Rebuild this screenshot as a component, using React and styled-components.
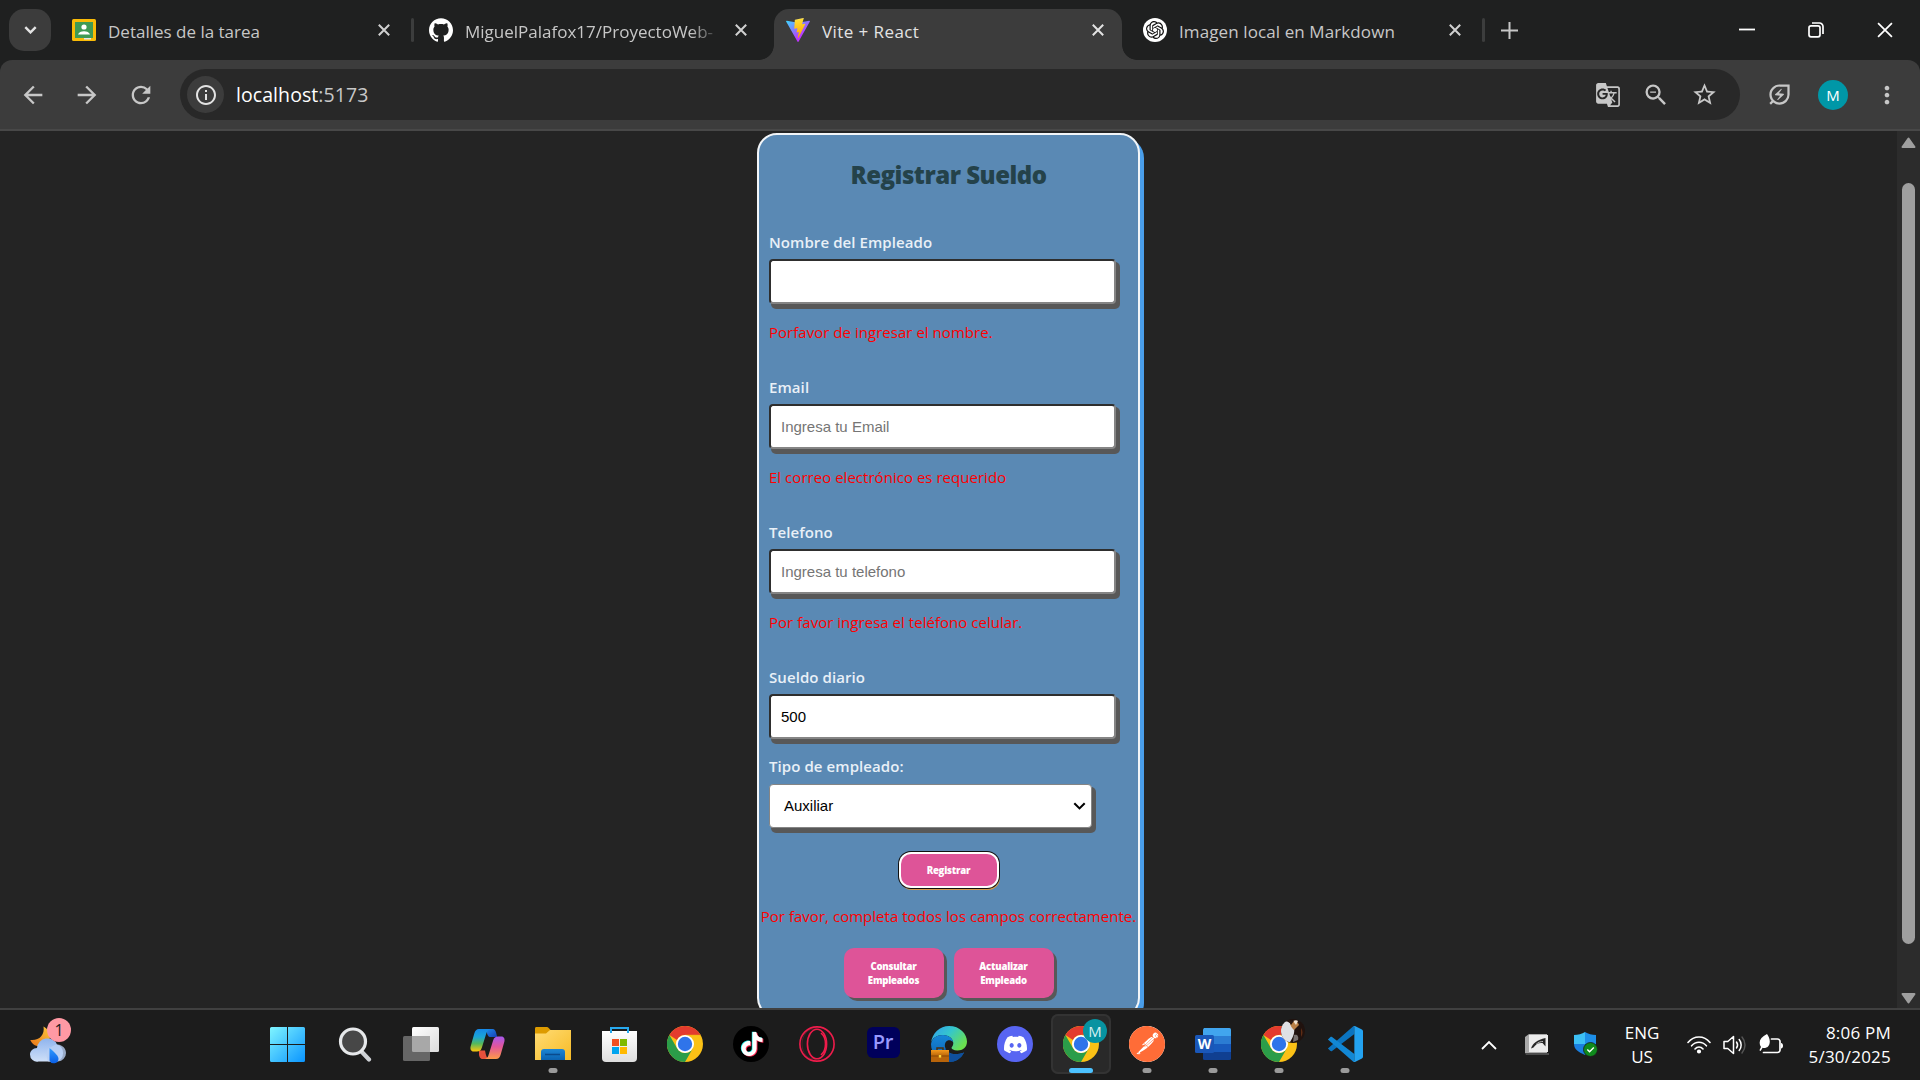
import React from "react";
import styled, { createGlobalStyle, css } from "styled-components";
import { SiGithub, SiOpenai, SiDiscord, SiPostman, SiTiktok } from "react-icons/si";
import { MdGTranslate, MdZoomOut, MdStarBorder, MdOutlineEnergySavingsLeaf, MdOutlineInfo, MdArrowBack, MdArrowForward, MdRefresh, MdMoreVert } from "react-icons/md";

const ui = `"Open Sans", "Noto Sans", sans-serif`;

const GlobalStyle = createGlobalStyle`
  * { box-sizing: border-box; }
  body { margin: 0; background: #242424; font-family: ${ui}; overflow: hidden; }
`;

const Screen = styled.div`
  display: flex;
  flex-direction: column;
  width: 1920px;
  height: 1080px;
  overflow: hidden;
  svg { display: block; flex: none; }
`;

/* ---------- tab strip ---------- */
const TabStrip = styled.header`
  display: flex;
  align-items: flex-end;
  height: 60px;
  background: #1f2020;
  flex: none;
`;
const TabSearch = styled.button`
  width: 42px;
  height: 42px;
  margin: 0 9px 9px 9px;
  padding: 0;
  border: 0;
  border-radius: 15px;
  background: #3c3c3c;
  display: grid;
  place-items: center;
`;
const Tab = styled.div`
  position: relative;
  display: flex;
  align-items: center;
  width: ${(p) => p.$w}px;
  height: 51px;
  padding: 0 ${(p) => p.$pr || 18}px 9px ${(p) => p.$pl || 12}px;
  border-radius: 15px 15px 0 0;
  color: ${(p) => (p.$active ? "#e3e3e3" : "#c7c7c7")};
  background: ${(p) => (p.$active ? "#3c3c3c" : "transparent")};
  ${(p) =>
    p.$active &&
    css`
      &::before,
      &::after {
        content: "";
        position: absolute;
        bottom: 0;
        width: 15px;
        height: 15px;
      }
      &::before {
        left: -15px;
        background: radial-gradient(circle at 0 0, transparent 14.5px, #3c3c3c 15.2px);
      }
      &::after {
        right: -15px;
        background: radial-gradient(circle at 100% 0, transparent 14.5px, #3c3c3c 15.2px);
      }
    `}
`;
const TabTitle = styled.span`
  flex: 1;
  margin: 4px 14px 0 12px;
  font-size: 17px;
  line-height: 24px;
  letter-spacing: ${(p) => p.$ls || 0}px;
  white-space: nowrap;
  overflow: hidden;
  ${(p) => p.$fade && "mask-image: linear-gradient(90deg, #000 88%, transparent 100%);"}
`;
const TabDivider = styled.i`
  width: 3px;
  height: 24px;
  margin: 0 ${(p) => p.$r || 0}px 18px 0;
  border-radius: 2px;
  background: #3c3d3d;
`;
const NewTab = styled.div`
  margin: 0 0 21px 16px;
`;
const WindowButtons = styled.div`
  display: flex;
  align-items: center;
  gap: 53px;
  margin: 0 27px 22px auto;
`;

/* ---------- toolbar ---------- */
const ToolbarBack = styled.div`
  background: #1f2020;
  flex: none;
`;
const Toolbar = styled.nav`
  display: flex;
  align-items: center;
  height: 71px;
  padding: 0 19px;
  border-radius: 12px 12px 0 0;
  background: #3c3c3c;
  border-bottom: 2px solid #484848;
  color: #c7c7c7;
`;
const NavIcons = styled.div`
  display: flex;
  flex: none;
  gap: 26px;
  width: 161px;
`;
const Omnibox = styled.div`
  display: flex;
  flex: none;
  align-items: center;
  width: 1560px;
  height: 51px;
  margin-right: 26px;
  padding: 0 22px 0 7px;
  border-radius: 26px;
  background: #282828;
`;
const SiteInfo = styled.span`
  display: grid;
  place-items: center;
  width: 37px;
  height: 37px;
  border-radius: 50%;
  background: #3c3c3c;
  color: #e3e3e3;
`;
const Url = styled.span`
  flex: 1;
  margin-left: 12px;
  font-size: 19.5px;
  line-height: 28px;
  letter-spacing: 0.07px;
  color: #c7c7c7;
  b { font-weight: 400; color: #fff; }
`;
const OmniIcons = styled.div`
  display: flex;
  align-items: center;
  gap: 21px;
`;
const Avatar = styled.span`
  display: grid;
  place-items: center;
  width: 30px;
  height: 30px;
  margin: 0 25px;
  border-radius: 50%;
  background: #0097a7;
  color: #fff;
  font: 15px/30px ${ui};
`;

/* ---------- page ---------- */
const Viewport = styled.main`
  display: flex;
  height: 877px;
  flex: none;
  overflow: hidden;
  background: #242424;
`;
const Content = styled.div`
  flex: 1;
  display: flex;
  justify-content: center;
  align-items: flex-start;
  padding-top: 2px;
`;
const Card = styled.form`
  display: flex;
  flex-direction: column;
  width: 383px;
  height: 885px;
  padding: 22px 10px 18px;
  border: 2px solid #f2f5f8;
  border-radius: 20px;
  background: #5a89b4;
  box-shadow: 4px 5px 0 #4a9eea;
`;
const Title = styled.h2`
  margin: 0 0 37px;
  text-align: center;
  font-size: 24px;
  line-height: 36px;
  font-weight: 800;
  letter-spacing: -0.48px;
  white-space: nowrap;
  color: #24424a;
`;
const Field = styled.div`
  margin-bottom: ${(p) => p.$gap}px;
`;
const Label = styled.label`
  display: block;
  margin-bottom: ${(p) => p.$mb || 5}px;
  font-size: 15px;
  line-height: 24px;
  font-weight: 600;
  letter-spacing: 0.08px;
  color: #e9f0f7;
`;
const boxed = css`
  border-radius: 4px;
  background: #fff;
  font-family: "Liberation Sans", Arial, sans-serif;
  font-size: 15px;
  box-shadow: 3px 4px 0 1px #585858;
`;
const Input = styled.input`
  ${boxed}
  display: block;
  width: 347px;
  height: 45px;
  padding: 0 10px;
  border: 2px solid;
  border-color: #2e2e2e #858585 #858585 #2e2e2e;
  color: #000;
  outline: 0;
  &::placeholder { color: #757575; }
`;
const Select = styled.div`
  ${boxed}
  display: flex;
  align-items: center;
  justify-content: space-between;
  width: 323px;
  height: 44px;
  padding: 0 5px 1px 14px;
  border: 1px solid #858585;
  color: #000;
`;
const ErrorText = styled.p`
  margin: ${(p) => p.$m || "16px 0 0"};
  font-size: 15px;
  line-height: 24px;
  letter-spacing: 0.03px;
  white-space: nowrap;
  text-align: ${(p) => p.$align || "left"};
  color: #ff0000;
`;
const PinkButton = styled.button`
  width: ${(p) => p.$w}px;
  height: ${(p) => p.$h}px;
  padding: 2px 0 0;
  border: 0;
  border-radius: 10px;
  background: #de5498;
  color: #fff;
  font: 800 9.6px/14px ${ui};
  letter-spacing: -0.22px;
  box-shadow: ${(p) =>
    p.$focused ? "0 0 0 2px #fff, 0 0 0 3px #101010, 1px 2px 0 2px #d79a4b" : "3px 3px 0 #585858"};
`;
const Actions = styled.div`
  display: flex;
  justify-content: center;
  gap: 10px;
`;
const Scrollbar = styled.aside`
  display: flex;
  flex-direction: column;
  align-items: center;
  width: 23px;
  padding: 6px 0 4px;
  background: #2c2c2c;
`;
const Thumb = styled.div`
  width: 13px;
  height: 761px;
  margin: 35px 0 auto;
  border-radius: 7px;
  background: #9f9f9f;
`;

/* ---------- taskbar ---------- */
const Taskbar = styled.footer`
  display: flex;
  align-items: center;
  height: 72px;
  border-top: 2px solid #404040;
  background: #1c1c1c;
  color: #fff;
`;
const Widgets = styled.div`
  position: relative;
  width: 256px;
  margin-bottom: 2px;
  padding-left: 29px;
`;
const Count = styled.span`
  position: absolute;
  left: 47px;
  top: -6px;
  width: 24px;
  height: 24px;
  border-radius: 50%;
  background: #ff99a4;
  color: #1c1c1c;
  font: 16px/24px ${ui};
  text-align: center;
`;
const Apps = styled.div`
  display: flex;
  margin-bottom: 2px;
`;
const AppTile = styled.div`
  position: relative;
  display: grid;
  place-items: center;
  width: 60px;
  height: 60px;
  margin: 0 3px;
  border-radius: 7px;
  ${(p) => p.$active && "background: #292929; box-shadow: inset 0 0 0 2px #333;"}
  &::after {
    content: "";
    display: ${(p) => (p.$open || p.$active ? "block" : "none")};
    position: absolute;
    bottom: 1px;
    left: 50%;
    width: ${(p) => (p.$active ? 24 : 9)}px;
    height: 5px;
    transform: translateX(-50%);
    border-radius: 3px;
    background: ${(p) => (p.$active ? "#4cc2ff" : "#9a9a9a")};
  }
`;
const ProfileBadge = styled.span`
  position: absolute;
  top: 5px;
  right: 4px;
  width: 24px;
  height: 24px;
  border-radius: 50%;
  font: 15px/24px ${ui};
  text-align: center;
  color: #d8f0f2;
  background: ${(p) => p.$bg};
`;
const Round = styled.span`
  display: grid;
  place-items: center;
  width: ${(p) => p.$size || 36}px;
  height: ${(p) => p.$size || 36}px;
  border-radius: 50%;
  background: ${(p) => p.$bg};
  color: #fff;
`;
const Premiere = styled.span`
  width: 33px;
  height: 31px;
  margin-bottom: 3px;
  border-radius: 6px;
  background: #00005b;
  color: #9999ff;
  font: 600 20px/29px ${ui};
  letter-spacing: -0.3px;
  text-align: center;
`;
const Tray = styled.div`
  display: flex;
  align-items: center;
  margin-left: auto;
  padding-right: 29px;
`;
const TrayItem = styled.div`
  margin: 0 ${(p) => p.$r}px 1px 0;
`;
const TrayText = styled.div`
  margin-right: ${(p) => p.$r || 0}px;
  margin-bottom: 1px;
  width: ${(p) => p.$w}px;
  font-size: 17px;
  line-height: 24px;
  letter-spacing: ${(p) => p.$ls || 0}px;
  white-space: nowrap;
  > div { display: flex; justify-content: ${(p) => (p.$align === "right" ? "flex-end" : "center")}; }
`;

/* ---------- drawings ---------- */
const Cross = ({ size = 12, w = 2, color = "#d0d0d0" }) => (
  <svg width={size} height={size} viewBox="0 0 12 12">
    <path d="M.8.8l10.4 10.4M11.2.8L.8 11.2" stroke={color} strokeWidth={w} />
  </svg>
);
const Chevron = ({ w, h, color, sw, up }) => (
  <svg width={w} height={h} viewBox="0 0 16 10">
    <path d={up ? "M1 9l7-7 7 7" : "M1.5 1.5L8 8l6.500-6.500"} fill="none" stroke={color} strokeWidth={sw} />
  </svg>
);
const Classroom = () => (
  <svg width="24" height="24" viewBox="0 0 24 24">
    <rect y="1" width="24" height="22" rx="1.500" fill="#f9bb07" />
    <rect x="3" y="4" width="18" height="16" fill="#3f9a55" />
    <circle cx="12" cy="9" r="2.600" fill="#fff" />
    <path d="M6 16.500c1-4.500 11-4.500 12 0z" fill="#fff" />
    <path d="M12 20h7v1.500h-7z" fill="#e6e6e6" />
  </svg>
);
const Vite = () => (
  <svg width="24" height="24" viewBox="0 0 256 257">
    <defs>
      <linearGradient id="va" x1="-.8%" x2="57.600%" y1="7.600%" y2="78.400%"><stop offset="0" stopColor="#41d1ff" /><stop offset="1" stopColor="#bd34fe" /></linearGradient>
      <linearGradient id="vb" x1="43%" x2="50%" y1="2%" y2="89%"><stop offset="0" stopColor="#ffea83" /><stop offset=".08" stopColor="#ffdd35" /><stop offset="1" stopColor="#ffa800" /></linearGradient>
    </defs>
    <path fill="url(#va)" d="M255.153 37.938L134.897 252.976c-2.483 4.440-8.862 4.466-11.382.048L.875 37.958c-2.746-4.814 1.371-10.646 6.827-9.670l120.385 21.517a6.537 6.537 0 0 0 2.322-.004l117.867-21.483c5.438-.991 9.574 4.796 6.877 9.620Z" />
    <path fill="url(#vb)" d="M185.432.063L96.440 17.501a3.268 3.268 0 0 0-2.634 3.014l-5.474 92.456a3.268 3.268 0 0 0 3.997 3.378l24.777-5.718c2.318-.535 4.413 1.507 3.936 3.838l-7.361 36.047c-.495 2.426 1.782 4.500 4.151 3.780l15.304-4.649c2.372-.72 4.652 1.360 4.150 3.788l-11.698 56.621c-.732 3.542 3.979 5.473 5.943 2.437l1.313-2.028l72.516-144.720c1.215-2.423-.88-5.186-3.540-4.672l-25.505 4.922c-2.396.462-4.435-1.770-3.759-4.114l16.646-57.705c.677-2.350-1.370-4.583-3.769-4.113Z" />
  </svg>
);
const Chrome = () => (
  <svg width="36" height="36" viewBox="0 0 36 36">
    <circle cx="18" cy="18" r="18" fill="#fbc116" />
    <path d="M2.410 9A18 18 0 0 1 33.600 9H18a9 9 0 0 0-8 5z" fill="#e33b2e" />
    <path d="M2.410 9A18 18 0 0 0 18 36l7.800-13.500A9 9 0 0 1 10.200 22.500z" fill="#2b9d49" />
    <path d="M18 9h15.600" stroke="#e8a613" strokeWidth=".5" />
    <circle cx="18" cy="18" r="9" fill="#fff" />
    <circle cx="18" cy="18" r="7.200" fill="#2f74ea" />
  </svg>
);
const Weather = () => (
  <svg width="38" height="40" viewBox="0 0 38 40">
    <defs>
      <linearGradient id="wm" x1="0" y1="1" x2="1" y2="0"><stop stopColor="#e8741a" /><stop offset="1" stopColor="#fbc93c" /></linearGradient>
      <linearGradient id="wc" x1="0" y1="0" x2="0" y2="1"><stop stopColor="#8fb4ee" /><stop offset="1" stopColor="#cfe0f8" /></linearGradient>
      <linearGradient id="wd" x1="0" y1="0" x2="0" y2="1"><stop stopColor="#2f9bff" /><stop offset="1" stopColor="#0a5fe6" /></linearGradient>
    </defs>
    <path d="M14.500 2.500C23 7 24 20 12 22 7 23 3 20 1.300 16 10 17 16 11 14.500 2.500z" fill="url(#wm)" />
    <path d="M8 24a10.500 10.500 0 0 1 20-3.500 9 9 0 0 1 0 17H9.500A7 7 0 0 1 1 30.500C1 27 4 24 8 24z" fill="url(#wc)" />
    <path d="M20 24c-3 2-3 8-1 13.500h10a8.500 8.500 0 0 0 8-8.500 8.500 8.500 0 0 0-13-7z" fill="#b9d0f4" opacity=".8" />
    <path d="M20.500 24c5 4 9 8 9 11a4.700 4.700 0 0 1-9 1.500z" fill="url(#wd)" />
  </svg>
);
const Start = () => (
  <svg width="38" height="35" viewBox="0 0 38 35">
    <defs><linearGradient id="st" x1="0" y1="0" x2="35" y2="35" gradientUnits="userSpaceOnUse"><stop stopColor="#7ff5ff" /><stop offset=".5" stopColor="#45c4ff" /><stop offset="1" stopColor="#0a95ff" /></linearGradient></defs>
    <path fill="url(#st)" d="M1.500 0H17v17H0V1.500A1.500 1.500 0 0 1 1.500 0zM18 0h15.500A1.500 1.500 0 0 1 35 1.500V17H18zM0 18h17v17H1.500A1.500 1.500 0 0 1 0 33.500zM18 18h17v15.500a1.500 1.500 0 0 1-1.500 1.500H18z" />
  </svg>
);
const Search = () => (
  <svg width="34" height="36" viewBox="0 0 34 36">
    <path d="M23 25l8 8.500" stroke="#cfd2d6" strokeWidth="4.200" strokeLinecap="round" />
    <circle cx="15" cy="15.500" r="12.500" fill="#474747" stroke="#e6e8ea" strokeWidth="3.200" />
  </svg>
);
const TaskView = () => (
  <svg width="36" height="36" viewBox="0 0 36 36">
    <defs><linearGradient id="tv" x1="0" y1="0" x2="1" y2="1"><stop stopColor="#fff" /><stop offset="1" stopColor="#dcdcdc" /></linearGradient></defs>
    <rect x="9" y="1" width="27" height="25" rx="1.500" fill="url(#tv)" />
    <rect y="10" width="27" height="25" rx="1.500" fill="#666" />
    <path d="M9 10h18v16H10.500A1.500 1.500 0 0 1 9 24.500z" fill="#a8a8a8" />
  </svg>
);
const Copilot = () => (
  <svg width="35" height="32" viewBox="0 0 35 32">
    <defs>
      <linearGradient id="c1" x1="0" y1="0" x2="0" y2="1"><stop stopColor="#1688e8" /><stop offset=".35" stopColor="#1aa5d8" /><stop offset=".65" stopColor="#54b95c" /><stop offset="1" stopColor="#ffc60a" /></linearGradient>
      <linearGradient id="c2" x1="0" y1="0" x2="0" y2="1"><stop stopColor="#a858ee" /><stop offset=".45" stopColor="#e2569a" /><stop offset="1" stopColor="#ff9a48" /></linearGradient>
      <linearGradient id="c3" x1="0" y1="0" x2="1" y2="1"><stop stopColor="#1f8be8" /><stop offset="1" stopColor="#163fb8" /></linearGradient>
    </defs>
    <path d="M16 1h6c3 0 3.600 2 4.200 4.200L27.200 9H20c-3 0-4-8-4-8z" fill="url(#c3)" />
    <path d="M9 22.500h6c1 4 1 8 5 8.500h-7c-3 0-3.400-2-4-4z" fill="#e8503c" />
    <path d="M9 1h12c-4 0-4.500 4-5.500 7l-3.600 11.500c-1 3-2.400 4-5 4H3.500C1 23.500 0 21 .6 18.500L4.300 5.500C5.200 2.500 6.500 1 9 1z" fill="url(#c1)" />
    <path d="M26 31H14c4 0 4.500-4 5.500-7l3.600-11.500c1-3 2.400-4 5-4h3.400c2.500 0 3.500 2.500 2.900 5L30.700 26.500C29.800 29.500 28.500 31 26 31z" fill="url(#c2)" />
  </svg>
);
const Explorer = () => (
  <svg width="36" height="34" viewBox="0 0 36 34">
    <defs>
      <linearGradient id="ex" x1="0" y1="0" x2="1" y2="1"><stop stopColor="#ffdc74" /><stop offset="1" stopColor="#f7bb26" /></linearGradient>
      <linearGradient id="eb" x1="0" y1="0" x2="0" y2="1"><stop stopColor="#1d86d4" /><stop offset="1" stopColor="#0b62b0" /></linearGradient>
    </defs>
    <path d="M0 1.500C0 .5.500 0 1.500 0h10c1 0 1.500.3 2.200 1L16 3.500V8H0z" fill="#dd9b00" />
    <path d="M0 6.500h11L15 3h21v30H0z" fill="url(#ex)" />
    <path d="M6 33v-8a3 3 0 0 1 3-3h18a3 3 0 0 1 3 3v8z" fill="url(#eb)" />
    <path d="M10 27.500h15" stroke="#0a4a8c" strokeWidth="1.500" />
  </svg>
);
const Store = () => (
  <svg width="35" height="36" viewBox="0 0 35 36">
    <defs><linearGradient id="so" x1="0" y1="0" x2="0" y2="1"><stop stopColor="#fff" /><stop offset="1" stopColor="#dedede" /></linearGradient></defs>
    <path d="M9 8V2h17v6" fill="none" stroke="#27a9ee" strokeWidth="2" />
    <path d="M0 5h35v27a4 4 0 0 1-4 4H4a4 4 0 0 1-4-4z" fill="url(#so)" />
    <path d="M9 2v5M26 2v5" stroke="#27a9ee" strokeWidth="2" />
    <path d="M10 13h7v7h-7z" fill="#f25022" /><path d="M18 13h7v7h-7z" fill="#7fba00" />
    <path d="M10 21h7v7h-7z" fill="#00a4ef" /><path d="M18 21h7v7h-7z" fill="#ffb900" />
  </svg>
);
const TikTok = () => (
  <svg width="36" height="36" viewBox="0 0 36 36">
    <circle cx="18" cy="18" r="18" fill="#000" />
    <g transform="translate(6.300 5.500)"><SiTiktok size={24} color="#25f4ee" /></g>
    <g transform="translate(7.900 6.800)"><SiTiktok size={24} color="#fe2c55" /></g>
    <g transform="translate(7 6)"><SiTiktok size={24} color="#fff" /></g>
  </svg>
);
const OperaGX = () => (
  <svg width="36" height="36" viewBox="0 0 36 36" fill="none" stroke="#ee1c4b">
    <circle cx="18" cy="18" r="17.100" strokeWidth="1.600" />
    <ellipse cx="18" cy="18" rx="9.600" ry="14.800" strokeWidth="1.600" />
    <path d="M22 7c6 5 6 17 0 22" strokeWidth="1.600" />
    <path d="M18 3.200C8 1.500 3 10 3 18s5 16.500 15 14.800" strokeWidth=".5" opacity=".5" />
  </svg>
);
const Edge = () => (
  <svg width="36" height="36" viewBox="0 0 36 36">
    <defs>
      <linearGradient id="e1" x1="0" y1="0" x2="1" y2=".6"><stop stopColor="#2f9cf2" /><stop offset=".5" stopColor="#35c6cc" /><stop offset="1" stopColor="#6ae04f" /></linearGradient>
      <linearGradient id="e2" x1="0" y1="0" x2="0" y2="1"><stop stopColor="#1587d8" /><stop offset="1" stopColor="#0f5fae" /></linearGradient>
      <linearGradient id="e3" x1="0" y1="0" x2="0" y2="1"><stop stopColor="#f59a1c" /><stop offset=".5" stopColor="#b8640a" /><stop offset="1" stopColor="#b8640a" /></linearGradient>
    </defs>
    <path d="M0 17C1 7 9 0 18 0c11 0 18 8 18 15.500 0 6-4.500 9-9.500 9-4 0-6-1.500-6-2.700 0-.8 1.800-1.700 1.800-4.600C22.300 13 18 9 12 9 6 9 1 12 0 17z" fill="url(#e1)" />
    <path d="M0 18C1 12 6 9 12 9c5 0 9.500 3 10.200 7C18 12 13 15 14 21c1 6 9 9.500 19 5.500C30 33 24 36 18 36 8 36 0 28 0 18z" fill="url(#e2)" />
    <path d="M14 21c1 6 9 9.500 19 5.500C30 33 24 36 18 36c-1-4-6-8-4-15z" fill="#0f4f9c" />
    <path d="M6 24v-2h6v2" fill="none" stroke="#4a2f10" strokeWidth="1.500" />
    <rect y="24" width="18" height="12" fill="url(#e3)" />
    <path d="M0 30h18" stroke="#8a4a06" /><rect x="7.800" y="29" width="2.400" height="2.600" fill="#ffd83a" />
  </svg>
);
const Word = () => (
  <svg width="36" height="32" viewBox="0 0 36 32">
    <path d="M9 0h25.500A1.500 1.500 0 0 1 36 1.500V8H8V1.500z" fill="#41a5ee" />
    <path d="M8 8h28v8H8z" fill="#2b7cd3" /><path d="M8 16h28v8H8z" fill="#185abd" />
    <path d="M8 24h28v6.500a1.500 1.500 0 0 1-1.500 1.500h-25A1.500 1.500 0 0 1 8 30.500z" fill="#103f91" />
    <rect y="7" width="19" height="18" rx="1.500" fill="#1a57b8" />
    <text x="9.500" y="20.800" textAnchor="middle" fontFamily="Open Sans, sans-serif" fontWeight="700" fontSize="14" fill="#fff">W</text>
  </svg>
);
const VSCode = () => (
  <svg width="36" height="36" viewBox="0 0 100 100">
    <path d="M2.500 62.500L9 69c1.500 1.400 3.500 1.500 5 .3L76 22V0L73 1 2.500 62.500z" fill="#0b74c0" />
    <path d="M2.500 37.500L9 31c1.500-1.400 3.500-1.500 5-.3L76 78v22l-3-1L2.500 37.500z" fill="#1287d4" />
    <path d="M73 1c2-1.200 4-1 6 0l18 9c2 1 3 2.500 3 4.500v71c0 2-1 3.500-3 4.500l-18 9c-2 1-4 1-6 0 2.500 1 3-1 3-3V4c0-2-.5-4-3-3z" fill="#23a2f0" />
  </svg>
);
const Photo = () => (
  <svg width="24" height="24" viewBox="0 0 24 24">
    <defs><clipPath id="ph"><circle cx="12" cy="12" r="12" /></clipPath></defs>
    <g clipPath="url(#ph)">
      <rect width="24" height="24" fill="#20120e" />
      <path d="M0 4C5 0 10 4 13 9c1 5-1 9-4 14L0 22z" fill="#dfe0e4" />
      <path d="M9 3c3-2 8-1 9 3l-5 5c-2-2-4-4-4-8z" fill="#b97f45" />
      <path d="M12 2c2-1 4-1 5 0l-2 4z" fill="#f2e4d2" />
      <path d="M7 1l6 1-3 4z" fill="#2a1812" />
      <path d="M13 16c3-1 5 1 4 5l-5 2z" fill="#77706e" />
      <path d="M20 9c2 3 2 6 0 9z" fill="#5e2c14" />
    </g>
  </svg>
);
const Scribble = () => (
  <svg width="24" height="22" viewBox="0 0 24 22">
    <path d="M0 3L4 0h18v19H0z" fill="#a9a9a9" /><path d="M0 19h24v2H1z" fill="#4c4c4c" />
    <path d="M4 1h19v17H4z" fill="#ececec" />
    <path d="M6 14.500C8 9 12 6 20.500 4v8.500l-3-3.500c-4-.5-7 1.500-9 4.500z" fill="#262626" />
    <path d="M11 10.500c2.500-2.500 5-3 7-3" stroke="#bdbdbd" strokeWidth="1" fill="none" />
  </svg>
);
const Shield = () => (
  <svg width="24" height="25" viewBox="0 0 24 25">
    <path d="M11 0c3 2 7 3 11 3v9H11z" fill="#1d8fe8" /><path d="M11 0C8 2 4 3 0 3v9h11z" fill="#3cc0f5" />
    <path d="M0 12h11v11C4 20 0 17 0 12z" fill="#1a7fe0" /><path d="M11 12h11c0 5-4 8-11 11z" fill="#0c57b4" />
    <circle cx="16.500" cy="17.500" r="7" fill="#0f8a1c" stroke="#1c1c1c" strokeWidth=".8" />
    <path d="M13.300 17.500l2.300 2.300 4.200-4.200" fill="none" stroke="#fff" strokeWidth="1.400" />
  </svg>
);
const Wifi = () => (
  <svg width="24" height="18" viewBox="0 0 24 18" fill="none" stroke="#fff" strokeWidth="1.600" strokeLinecap="round">
    <path d="M1 6.500c6-7.300 16-7.300 22 0M4.600 9.800c4-4.800 10.800-4.800 14.800 0M8 13c2.200-2.700 5.800-2.700 8 0" />
    <circle cx="12" cy="15.500" r="1.300" fill="#fff" />
  </svg>
);
const Speaker = () => (
  <svg width="24" height="20" viewBox="0 0 24 20" fill="none" stroke="#fff" strokeWidth="1.500" strokeLinejoin="round" strokeLinecap="round">
    <path d="M1 6.500h3.800L10.500 1.500v17L4.800 13.500H1z" />
    <path d="M13.500 7c1.300 1.800 1.300 4.200 0 6M16.200 4.500c2.600 3.200 2.600 7.800 0 11" />
    <path d="M19 2c4 4.700 4 11.300 0 16" stroke="#555" />
  </svg>
);
const Battery = () => (
  <svg width="24" height="22" viewBox="0 0 24 22">
    <path d="M12.500 5h6A2.500 2.500 0 0 1 21 7.500v8.500a2.500 2.500 0 0 1-2.500 2.500H4.500" fill="none" stroke="#fff" strokeWidth="1.700" strokeLinecap="round" />
    <path d="M22 9c1.500.3 2 1.300 2 2.700s-.5 2.500-2 2.800z" fill="#fff" />
    <path d="M8 0c1.300 2 2.800 4 2.800 7.500 0 4.500-2.800 6.500-5.600 6.500-.8 0-1.600-.3-1.600-.3L1.600 17 .4 16.200 2 13C-1 8 1 3.500 8 0z" fill="#fff" />
  </svg>
);

const fields = [
  { label: "Nombre del Empleado", error: "Porfavor de ingresar el nombre." },
  { label: "Email", placeholder: "Ingresa tu Email", error: "El correo electrónico es requerido" },
  { label: "Telefono", placeholder: "Ingresa tu telefono", error: "Por favor ingresa el teléfono celular." },
];

const apps = [
  { icon: <Start /> },
  { icon: <Search /> },
  { icon: <TaskView /> },
  { icon: <Copilot /> },
  { icon: <Explorer />, open: true },
  { icon: <Store /> },
  { icon: <Chrome /> },
  { icon: <TikTok /> },
  { icon: <OperaGX /> },
  { icon: <Premiere>Pr</Premiere> },
  { icon: <Edge /> },
  { icon: <Round $bg="#5865f2"><SiDiscord size={23} /></Round> },
  { icon: <><Chrome /><ProfileBadge $bg="#0793a1">M</ProfileBadge></>, active: true },
  { icon: <Round $bg="#fff"><SiPostman size={36} color="#ff6c37" /></Round>, open: true },
  { icon: <Word />, open: true },
  { icon: <><Chrome /><ProfileBadge><Photo /></ProfileBadge></>, open: true },
  { icon: <VSCode />, open: true },
];

export default function App() {
  return (
    <Screen>
      <GlobalStyle />
      <TabStrip>
        <TabSearch><Chevron w={13} h={8} color="#e3e3e3" sw={3} /></TabSearch>
        <Tab $w={351} $pr={21}><Classroom /><TabTitle>Detalles de la tarea</TabTitle><Cross /></Tab>
        <TabDivider $r={3} />
        <Tab $w={357} $pr={27}><SiGithub size={24} color="#fff" /><TabTitle $fade>MiguelPalafox17/ProyectoWeb-</TabTitle><Cross /></Tab>
        <Tab $w={348} $active><Vite /><TabTitle $ls={0.42}>Vite + React</TabTitle><Cross color="#e3e3e3" /></Tab>
        <Tab $w={360} $pl={21} $pr={21}><Round $bg="#fff" $size={24}><SiOpenai size={18} color="#111" /></Round><TabTitle $ls={0.1}>Imagen local en Markdown</TabTitle><Cross /></Tab>
        <TabDivider />
        <NewTab>
          <svg width="17" height="17" viewBox="0 0 17 17"><path d="M8.500 0v17M0 8.500h17" stroke="#c7c7c7" strokeWidth="2" /></svg>
        </NewTab>
        <WindowButtons>
          <svg width="16" height="16"><path d="M0 7.500h16" stroke="#fff" strokeWidth="1.800" /></svg>
          <svg width="16" height="16" viewBox="0 0 16 16" fill="none" stroke="#fff" strokeWidth="1.700">
            <rect x="1" y="3.800" width="11" height="11" rx="2" />
            <path d="M4 1h7.500A3.500 3.500 0 0 1 15 4.500V12" />
          </svg>
          <Cross size={16} w={1.3} color="#fff" />
        </WindowButtons>
      </TabStrip>
      <ToolbarBack>
        <Toolbar>
          <NavIcons><MdArrowBack size={28} /><MdArrowForward size={28} /><MdRefresh size={28} /></NavIcons>
          <Omnibox>
            <SiteInfo><MdOutlineInfo size={24} /></SiteInfo>
            <Url><b>localhost</b>:5173</Url>
            <OmniIcons><MdGTranslate size={26} /><MdZoomOut size={28} /><MdStarBorder size={27} /></OmniIcons>
          </Omnibox>
          <MdOutlineEnergySavingsLeaf size={27} />
          <Avatar>M</Avatar>
          <MdMoreVert size={28} />
        </Toolbar>
      </ToolbarBack>

      <Viewport>
        <Content>
          <Card>
            <Title>Registrar Sueldo</Title>
            {fields.map((f) => (
              <Field key={f.label} $gap={31}>
                <Label>{f.label}</Label>
                <Input placeholder={f.placeholder} />
                <ErrorText>{f.error}</ErrorText>
              </Field>
            ))}
            <Field $gap={15}>
              <Label>Sueldo diario</Label>
              <Input defaultValue="500" />
            </Field>
            <Field $gap={26}>
              <Label $mb={6}>Tipo de empleado:</Label>
              <Select>Auxiliar<Chevron w={13} h={8} color="#000" sw={2.6} /></Select>
            </Field>
            <Actions><PinkButton type="button" $w={96} $h={32} $focused>Registrar</PinkButton></Actions>
            <ErrorText $m="18px -10px 20px" $align="center">Por favor, completa todos los campos correctamente.</ErrorText>
            <Actions>
              <PinkButton type="button" $w={100} $h={50}>Consultar<br />Empleados</PinkButton>
              <PinkButton type="button" $w={100} $h={50}>Actualizar<br />Empleado</PinkButton>
            </Actions>
          </Card>
        </Content>
        <Scrollbar>
          <svg width="15" height="11"><path d="M7.500 1.500L13.500 10h-12z" fill="#9f9f9f" stroke="#9f9f9f" strokeWidth="2" strokeLinejoin="round" /></svg>
          <Thumb />
          <svg width="15" height="11"><path d="M7.500 9.500L13.500 1h-12z" fill="#9f9f9f" stroke="#9f9f9f" strokeWidth="2" strokeLinejoin="round" /></svg>
        </Scrollbar>
      </Viewport>

      <Taskbar>
        <Widgets><Weather /><Count>1</Count></Widgets>
        <Apps>
          {apps.map((a, i) => <AppTile key={i} $open={a.open} $active={a.active}>{a.icon}</AppTile>)}
        </Apps>
        <Tray>
          <TrayItem $r={28}><Chevron w={16} h={10} color="#fff" sw={1.8} up /></TrayItem>
          <TrayItem $r={25}><Scribble /></TrayItem>
          <TrayItem $r={26}><Shield /></TrayItem>
          <TrayText $w={36} $r={27} $align="center"><div>ENG</div><div>US</div></TrayText>
          <TrayItem $r={12}><Wifi /></TrayItem>
          <TrayItem $r={12}><Speaker /></TrayItem>
          <TrayItem $r={24}><Battery /></TrayItem>
          <TrayText $w={84} $ls={0.22} $align="right"><div>8:06 PM</div><div>5/30/2025</div></TrayText>
        </Tray>
      </Taskbar>
    </Screen>
  );
}
